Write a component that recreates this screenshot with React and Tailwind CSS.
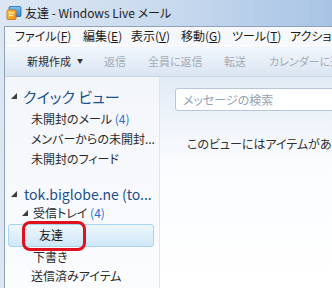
import React from 'react';

const jp = "font-['Noto_Sans_CJK_JP',sans-serif] [font-feature-settings:'palt']";

const MailIcon = () => (
  <svg width="16" height="16" viewBox="0 0 16 16">
    <defs>
      <linearGradient id="wlmBlue" x1="0" y1="0" x2="0" y2="1">
        <stop offset="0" stopColor="#7fc3f0" />
        <stop offset="1" stopColor="#2f7fc8" />
      </linearGradient>
      <linearGradient id="wlmOrange" x1="0" y1="0" x2="1" y2="1">
        <stop offset="0" stopColor="#ffd34d" />
        <stop offset="1" stopColor="#f08a1c" />
      </linearGradient>
    </defs>
    <rect x="3" y="1.5" width="12" height="10" rx="1" fill="url(#wlmBlue)" stroke="#2a6aa8" strokeWidth="0.8" />
    <rect x="1" y="5" width="9" height="9.5" rx="1" fill="url(#wlmOrange)" stroke="#c86a10" strokeWidth="0.8" />
    <path d="M3 8 H8 M3 10.5 H7" stroke="#fff6d0" strokeWidth="1" />
  </svg>
);

const MenuItem = ({ label, k, width }) => (
  <span className={`${width} shrink-0 whitespace-nowrap`}>
    {label}(<span className="underline underline-offset-1">{k}</span>)
  </span>
);

const Tri = () => (
  <svg width="6" height="6" viewBox="0 0 6 6" className="shrink-0">
    <path d="M6 0 L6 6 L0 6 Z" fill="#3c3c3c" />
  </svg>
);

export default function App() {
  return (
    <div className={`relative w-[332px] h-[288px] overflow-hidden bg-gradient-to-r from-[#dde7f3] via-[#c9daee] to-[#a8c4e5] ${jp}`}>
      {/* title bar */}
      <div className="h-[26px] flex items-center pl-[6px] gap-[3px]">
        <MailIcon />
        <span className="text-[12px] leading-none text-[#1e1e1e] whitespace-nowrap">友達 - Windows Live メール</span>
      </div>

      <div className="ml-[4px] h-[262px] border-l border-t border-[#8fa3bd] flex flex-col bg-white">
        {/* menu bar */}
        <div className="h-[18px] flex items-center bg-[#f6f8fb] text-[12px] leading-none text-[#1a1a1a] pl-[10px] whitespace-nowrap overflow-hidden">
          <MenuItem label="ファイル" k="F" width="w-[68px]" />
          <MenuItem label="編集" k="E" width="w-[48px]" />
          <MenuItem label="表示" k="V" width="w-[50px]" />
          <MenuItem label="移動" k="G" width="w-[51px]" />
          <MenuItem label="ツール" k="T" width="w-[58px]" />
          <span className="shrink-0">アクション</span>
        </div>

        {/* toolbar */}
        <div className="h-[32px] border-t border-white border-b border-b-[#c6d4e5] bg-gradient-to-b from-[#f3f7fc] to-[#dae5f2] flex items-center text-[11px] leading-none whitespace-nowrap pl-[22px] overflow-hidden">
          <span className="shrink-0 text-[#2b2b2b] w-[77px] flex items-center gap-[6px]">
            新規作成
            <span className="text-[6px] text-[#333]">▼</span>
          </span>
          <span className="shrink-0 text-[#a3abb6] w-[44px]">返信</span>
          <span className="shrink-0 text-[#a3abb6] w-[76px]">全員に返信</span>
          <span className="shrink-0 text-[#a3abb6] w-[45px]">転送</span>
          <span className="shrink-0 text-[#a3abb6]">カレンダーに追加</span>
        </div>

        {/* body */}
        <div className="flex flex-1 min-h-0">
          {/* folder pane */}
          <div className="w-[155px] shrink-0 border-r border-[#dfe6ef] bg-gradient-to-b from-[#f3f6fb] to-[#fbfcfe] pt-[8px] whitespace-nowrap">
            <div className="h-[22px] flex items-center pl-[6px] gap-[6px]">
              <Tri />
              <span className="text-[15px] leading-none text-[#1e4f8e]">クイック ビュー</span>
            </div>
            <div className="mt-[2px] text-[12px] leading-none text-[#2a2a2a] pl-[26px]">
              <div className="h-[20px] flex items-center">
                未開封のメール&nbsp;<span className="text-[#2a6fd6]">(4)</span>
              </div>
              <div className="h-[20px] flex items-center">メンバーからの未開封...</div>
              <div className="h-[20px] flex items-center">未開封のフィード</div>
            </div>

            <div className="mt-[15px] h-[19px] flex items-center pl-[6px] gap-[7px]">
              <Tri />
              <span className="text-[14px] leading-none text-[#1e4f8e]">tok.biglobe.ne (to...</span>
            </div>
            <div className="h-[20px] flex items-center pl-[17px] gap-[5px] text-[12px] leading-none">
              <Tri />
              <span className="text-[#2a2a2a]">受信トレイ&nbsp;<span className="text-[#2a6fd6]">(4)</span></span>
            </div>
            <div className="mt-[1px] ml-[3px] mr-[5px] h-[23px] rounded-[3px] border border-[#a9d3f2] bg-gradient-to-b from-[#eef7fd] to-[#cfe7f8] pl-[30px] pt-[3px] text-[12px] leading-[14px] text-[#1a1a1a]">
              友達
            </div>
            <div className="h-[19px] flex items-center pl-[28px] text-[12px] leading-none text-[#2a2a2a]">下書き</div>
            <div className="h-[20px] flex items-center pl-[26px] text-[12px] leading-none text-[#2a2a2a]">送信済みアイテム</div>
          </div>

          {/* message pane */}
          <div className="flex-1 min-w-0 overflow-hidden bg-gradient-to-b from-[#e3ebf6] via-[#fafcfe] via-40% to-white pt-[11px] pl-[15px] whitespace-nowrap">
            <div className="h-[23px] w-[180px] rounded-[3px] border border-[#b7c6d9] bg-white flex items-center pl-[7px] text-[12px] leading-none text-[#95a3b5]">
              メッセージの検索
            </div>
            <div className="mt-[27px] pl-[12px] text-[12px] leading-none text-[#2f2f2f]">
              このビューにはアイテムがありません。
            </div>
          </div>
        </div>
      </div>

      {/* red annotation */}
      <div className="absolute left-[22px] top-[221px] w-[64px] h-[30px] rounded-[8px] border-[3px] border-[#e0101c]" />
    </div>
  );
}
